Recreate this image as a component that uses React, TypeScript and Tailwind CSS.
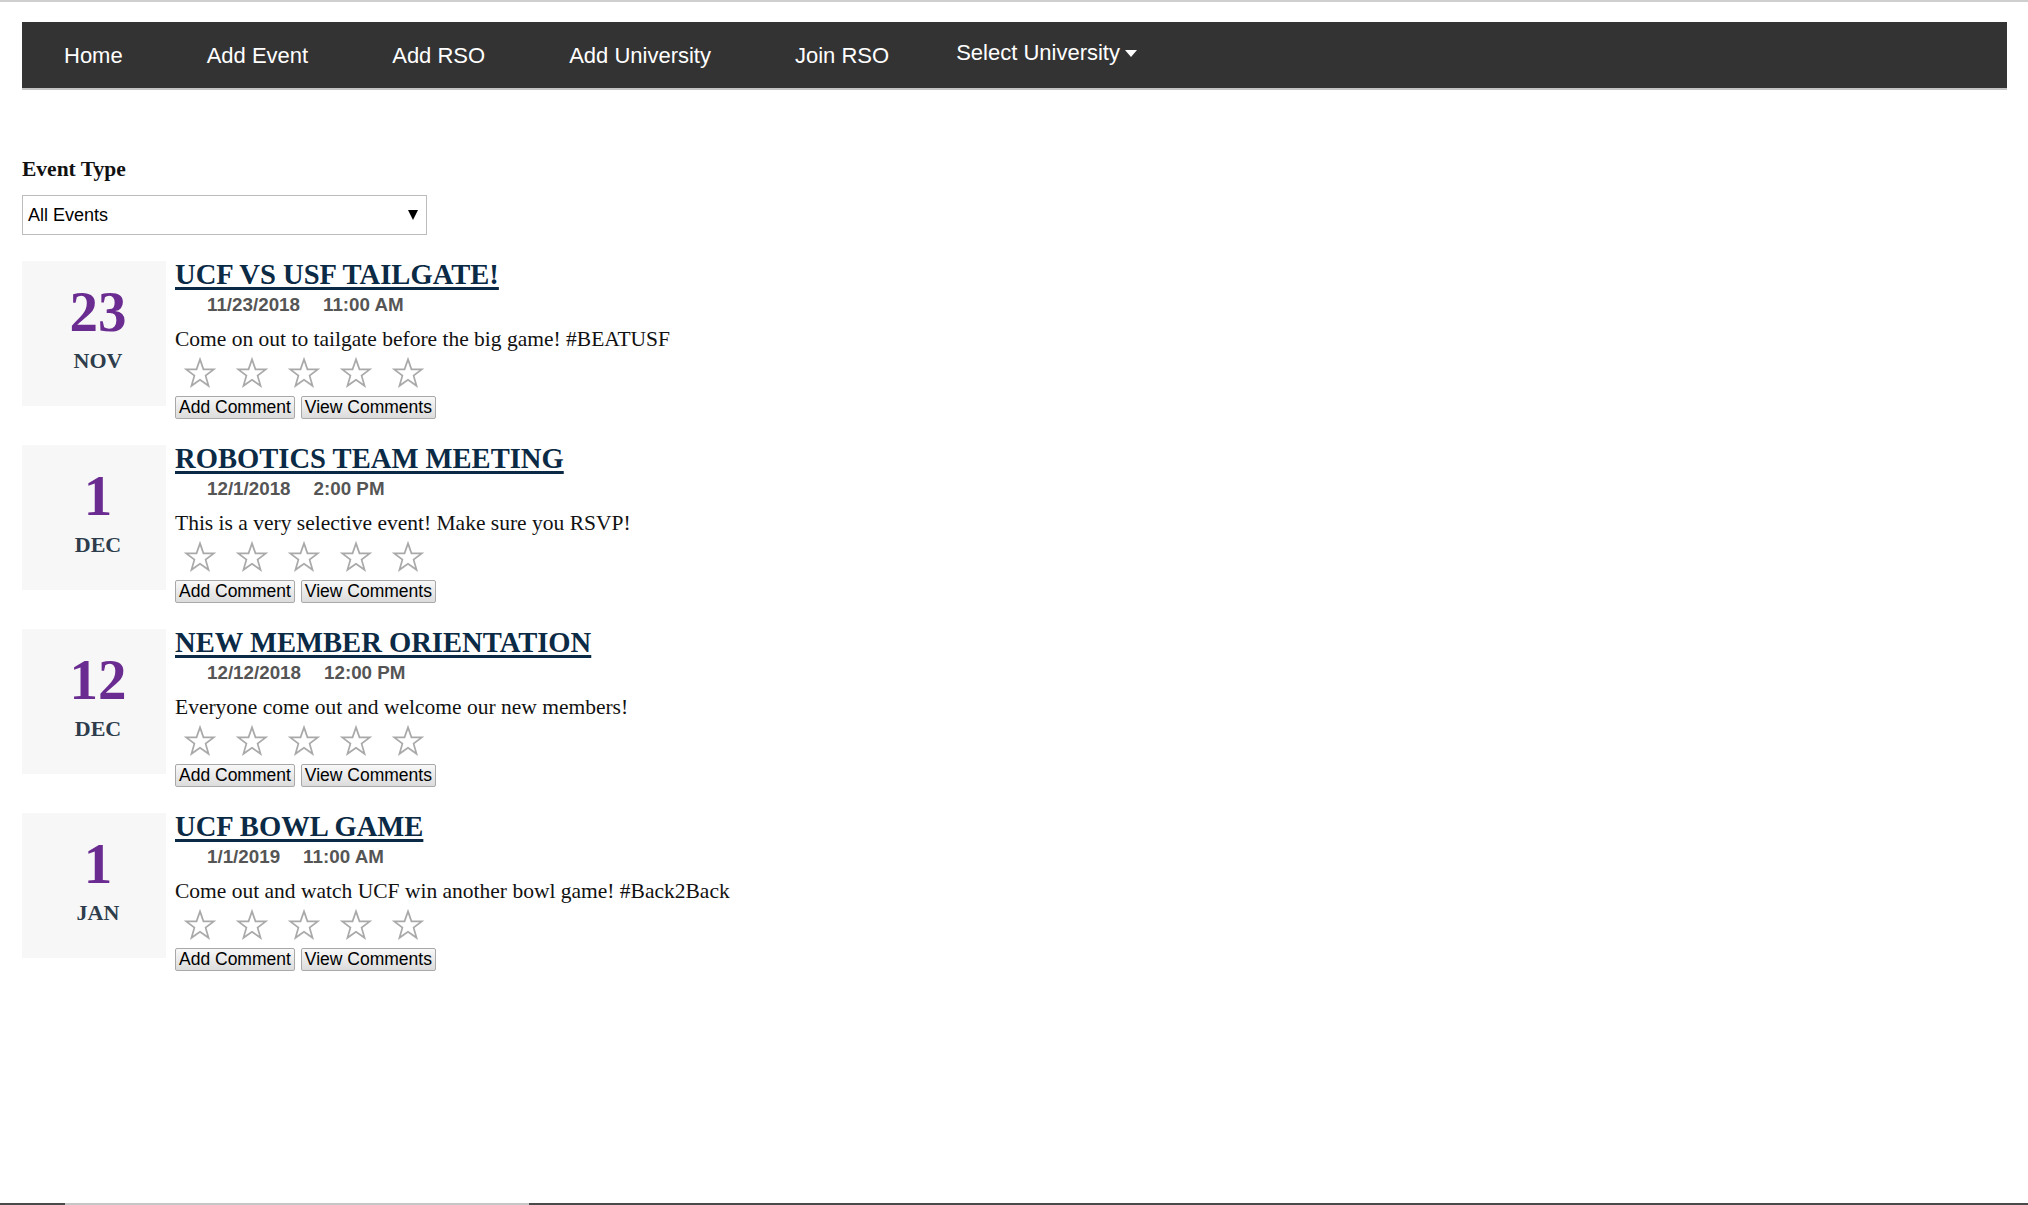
import { useState } from 'react';

type EventItem = {
  day: string;
  month: string;
  title: string;
  date: string;
  time: string;
  description: string;
};

const events: EventItem[] = [
  {
    day: '23',
    month: 'NOV',
    title: 'UCF VS USF TAILGATE!',
    date: '11/23/2018',
    time: '11:00 AM',
    description: 'Come on out to tailgate before the big game! #BEATUSF',
  },
  {
    day: '1',
    month: 'DEC',
    title: 'ROBOTICS TEAM MEETING',
    date: '12/1/2018',
    time: '2:00 PM',
    description: 'This is a very selective event! Make sure you RSVP!',
  },
  {
    day: '12',
    month: 'DEC',
    title: 'NEW MEMBER ORIENTATION',
    date: '12/12/2018',
    time: '12:00 PM',
    description: 'Everyone come out and welcome our new members!',
  },
  {
    day: '1',
    month: 'JAN',
    title: 'UCF BOWL GAME',
    date: '1/1/2019',
    time: '11:00 AM',
    description: 'Come out and watch UCF win another bowl game! #Back2Back',
  },
];

const navLinks = ['Home', 'Add Event', 'Add RSO', 'Add University', 'Join RSO'];

function Star() {
  return (
    <svg viewBox="0 0 24 24" className="w-[32px] h-[32px]">
      <polygon
        points="12,1.8 14.6,9.2 22.4,9.3 16.2,14 18.4,21.6 12,17.1 5.6,21.6 7.8,14 1.6,9.3 9.4,9.2"
        fill="none"
        stroke="#a9a9a9"
        strokeWidth="1.3"
        strokeLinejoin="miter"
      />
    </svg>
  );
}

function EventRow({ ev }: { ev: EventItem }) {
  return (
    <div className="flex items-start">
      <div className="mt-[1px] w-[144px] h-[145px] bg-[#f7f7f7] flex flex-col items-center pt-[22px] pl-[8px]">
        <div className="text-[57px] leading-none font-bold text-[#6a2c91]">{ev.day}</div>
        <div className="mt-[10px] text-[22px] leading-none font-bold text-[#2e3d4c]">{ev.month}</div>
      </div>

      <div className="ml-[9px] flex flex-col items-start">
        <a
          href="#"
          className="text-[28.6px] leading-[30px] font-bold text-[#0b2a45] underline decoration-[3px] underline-offset-[3px]"
        >
          {ev.title}
        </a>
        <div className="mt-[4px] ml-[32px] flex gap-[23px] font-['Liberation_Sans',Arial,sans-serif] text-[18.8px] leading-[22px] font-bold text-[#555]">
          <span>{ev.date}</span>
          <span>{ev.time}</span>
        </div>
        <p className="mt-[11px] text-[21.5px] leading-[24px] text-[#111]">{ev.description}</p>
        <div className="mt-[6px] ml-[9px] flex gap-[20px]">
          <Star />
          <Star />
          <Star />
          <Star />
          <Star />
        </div>
        <div className="mt-[7px] flex gap-[6px] font-['Liberation_Sans',Arial,sans-serif]">
          <button className="h-[23px] px-[3px] text-[17.5px] leading-none text-black border border-[#a9a9a9] rounded-[2px] bg-gradient-to-b from-[#f8f8f8] to-[#dcdcdc]">
            Add Comment
          </button>
          <button className="h-[23px] px-[3px] text-[17.5px] leading-none text-black border border-[#a9a9a9] rounded-[2px] bg-gradient-to-b from-[#f8f8f8] to-[#dcdcdc]">
            View Comments
          </button>
        </div>
      </div>
    </div>
  );
}

export default function App() {
  const [filter, setFilter] = useState('all');

  return (
    <div className="h-[1205px] flex flex-col bg-white overflow-hidden font-['Liberation_Serif','Times_New_Roman',serif]">
      <div className="h-[2px] bg-[#cfcfcf]" />

      <nav className="mt-[20px] ml-[22px] mr-[21px] h-[68px] bg-[#333] border-b-2 border-[#c4c4c4] flex items-center font-['Liberation_Sans',Arial,sans-serif] text-[22px] text-white">
        {navLinks.map((label) => (
          <a key={label} href="#" className="px-[42px]">
            {label}
          </a>
        ))}
        <button className="ml-[25px] mt-[-5px] flex items-center gap-[5px] text-[22px] text-white">
          Select University
          <svg viewBox="0 0 12 7" className="w-[12px] h-[7px] mt-[2px]">
            <polygon points="0,0 12,0 6,7" fill="#fff" />
          </svg>
        </button>
      </nav>

      <div className="ml-[22px] mt-[67px]">
        <label className="block text-[21.5px] leading-[24px] font-bold text-[#111]">Event Type</label>
        <div className="relative mt-[14px] w-[405px] h-[40px]">
          <select
            value={filter}
            onChange={(e) => setFilter(e.target.value)}
            className="appearance-none w-full h-full border border-[#bcbcbc] bg-white pl-[5px] font-['Liberation_Sans',Arial,sans-serif] text-[18px] text-black outline-none"
          >
            <option value="all">All Events</option>
            <option value="public">Public</option>
            <option value="private">Private</option>
            <option value="rso">RSO</option>
          </select>
          <svg viewBox="0 0 10 10" className="absolute right-[9px] top-[15px] w-[10px] h-[10px] pointer-events-none">
            <polygon points="0,0 10,0 5,10" fill="#000" />
          </svg>
        </div>

        <div className="mt-[25px] flex flex-col gap-[25px]">
          {events.map((ev) => (
            <EventRow key={ev.title} ev={ev} />
          ))}
        </div>
      </div>

      <div className="mt-auto h-[2px] flex">
        <div className="w-[65px] bg-[#4a4a4a]" />
        <div className="w-[464px] bg-[#c6c6c6]" />
        <div className="flex-1 bg-[#4a4a4a]" />
      </div>
    </div>
  );
}
